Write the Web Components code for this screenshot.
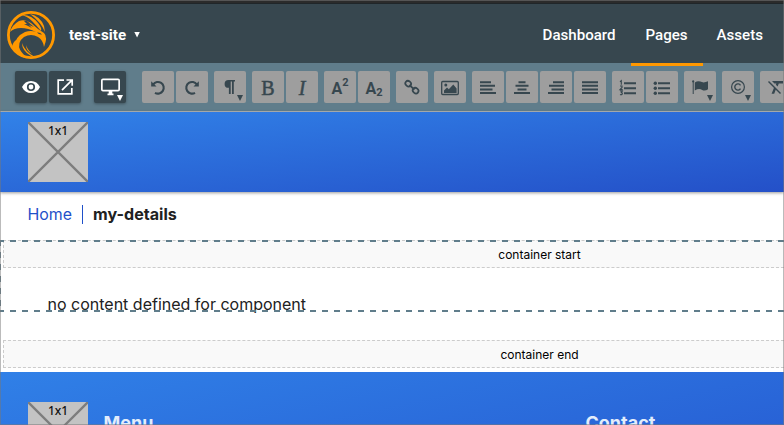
<!DOCTYPE html>
<html lang="en"><head><meta charset="utf-8"><title>test-site</title>
<style>html,body{margin:0;height:100%;overflow:hidden;background:#fff}</style></head>
<body><site-editor></site-editor>
<script>
const define=(name,css,html)=>customElements.define(name,class extends HTMLElement{
  constructor(){super();this.attachShadow({mode:'open'}).innerHTML=`<style>*{box-sizing:border-box}${css}</style>${html}`}
});
const icons={
eye:'<path fill-rule="evenodd" d="M7 16C9 12 12 9.9 16 9.9S23 12 25 16C23 20 20 22.1 16 22.1S9 20 7 16ZM16 11.9a4.1 4.1 0 1 0 0 8.2 4.1 4.1 0 0 0 0-8.2Zm0 1.7a2.4 2.4 0 1 1 0 4.8 2.4 2.4 0 0 1 0-4.8Z"/>',
open:'<path d="M15 9.2H9.2v13.6h13.6V17M17.5 9h5.7v5.7M23 9.2 13 19.2" fill="none" stroke="currentColor" stroke-width="1.7"/>',
monitor:'<path fill-rule="evenodd" d="M9 7.5h15q2 0 2 2v9q0 2-2 2h-5.7v2h1.2v1.7h-6v-1.7h1.2v-2H9q-2 0-2-2v-9q0-2 2-2Zm-.3 1.7v9.6h15.6V9.2Z"/>',
undo:'<path d="M11.2 13.4A5.8 5.8 0 1 1 13 21.8" fill="none" stroke="currentColor" stroke-width="2.1"/><path d="M9.2 10.3v5.3h5.3Z"/>',
redo:'<path d="M20.8 13.4A5.8 5.8 0 1 0 19 21.8" fill="none" stroke="currentColor" stroke-width="2.1"/><path d="M22.8 10.3v5.3h-5.3Z"/>',
para:'<path fill-rule="evenodd" d="M14.5 9H21v1.6h-1.2v12.4H18V10.6h-1.3v12.4h-1.8v-6.2h-.4a3.9 3.9 0 0 1 0-7.8Z"/>',
link:'<g fill="none" stroke="currentColor" stroke-width="1.7"><ellipse cx="12.2" cy="12.7" rx="3" ry="2.6" transform="rotate(40 12.2 12.7)"/><ellipse cx="19.6" cy="19.7" rx="3" ry="2.6" transform="rotate(40 19.6 19.7)"/><path d="m13.4 14 5 4.6" stroke-width="1.8"/></g>',
image:'<rect x="7.7" y="10.5" width="16.6" height="13" rx="1" fill="none" stroke="currentColor" stroke-width="1.3"/><circle cx="11.8" cy="14" r="1.5"/><path d="M10 22v-2.5l3-3 1.8 1.7 4.5-4.6 3.3 3.8V22Z"/>',
left:'<path d="M8 10.2h11v2H8zM8 13.8h15v2H8zM8 17.4h12.5v2H8zM8 21h16v2H8z"/>',
center:'<path d="M12.5 10.2h7v2h-7zM9.5 13.8h13v2h-13zM11.5 17.4h9v2h-9zM8 21h16v2H8z"/>',
right:'<path d="M13 10.2h11v2H13zM9 13.8h15v2H9zM11.5 17.4H24v2H11.5zM8 21h16v2H8z"/>',
justify:'<path d="M8 10.2h16v2H8zM8 13.8h16v2H8zM8 17.4h16v2H8zM8 21h16v2H8z"/>',
ol:'<path d="M12 11.2h12v2H12zM12 16.2h12v2H12zM12 21.2h12v2H12z"/><g fill="none" stroke="currentColor" stroke-width="1.1"><path d="m8 10.7 1.3-1v4M8 15h2v1.5L8 18.6h2.7M8 20h2.3l-1 1.6q1.5.3.9 1.5-.7 1-2.2.5"/></g>',
ul:'<circle cx="9.3" cy="12.2" r="1.7"/><circle cx="9.3" cy="17.2" r="1.7"/><circle cx="9.3" cy="22.2" r="1.7"/><path d="M12 11.2h12v2H12zM12 16.2h12v2H12zM12 21.2h12v2H12z"/>',
flag:'<circle cx="9.2" cy="10.4" r="1.1"/><path d="M8.7 10h1v13h-1zM10.8 11.5q3-2 5.4-.9c2.8 1.3 5 .9 7.8-.3v7.9q-3 2-5.8.7-3.3-1.8-7.4.5Z"/>',
copy:'<circle cx="16" cy="16" r="6.4" fill="none" stroke="currentColor" stroke-width="1.2"/><path d="M18.5 14.3a3.1 3.1 0 1 0 0 3.4" fill="none" stroke="currentColor" stroke-width="1.4"/>',
clear:'<path d="M12 10h11v2.4h-4.2l-1.2 3-1.8-1.7.6-1.3h-2ZM14.2 16.3l1.8 1.7-1.8 4.7h-2.6Z"/><path d="m8.5 10.5 12 12" fill="none" stroke="currentColor" stroke-width="1.4"/>'
};
customElements.define('tool-button',class extends HTMLElement{
 connectedCallback(){const r=this.attachShadow({mode:'open'}),i=this.getAttribute('icon');
 r.innerHTML=`<style>:host{display:grid;place-items:center;position:relative;flex:none;width:32px;height:32px;border-radius:2px;background:#9e9e9e;color:#37474f;font:20px "Liberation Serif",serif;-webkit-text-stroke:.5px #37474f}
 :host([dark]){background:#37474f;color:#fff;box-shadow:0 1px 3px #0005}svg{display:block;fill:currentColor}
 .arrow{position:absolute;right:3px;bottom:2px;width:6px;height:6px;background:currentColor;clip-path:polygon(0 0,100% 0,50% 100%)}
 :host([sans]){font:bold 16px Roboto,sans-serif;-webkit-text-stroke:0}::slotted(span),::slotted(em){line-height:1;margin-top:1px}</style>${i?`<svg width="32" height="32" viewBox="0 0 32 32">${icons[i]}</svg>`:'<slot></slot>'}${this.hasAttribute('menu')?'<i class="arrow"></i>':''}`}
});
customElements.define('script-letter',class extends HTMLElement{
 connectedCallback(){const up=this.hasAttribute('up');this.attachShadow({mode:'open'}).innerHTML=`<style>:host{display:flex;height:20px;margin-top:1px}span{line-height:22px}small{font-size:11px;line-height:${up?10:29}px}</style><span>A</span><small>2</small>`}
});
define('site-logo',':host{display:block;width:48px;height:48px;flex:none}svg{display:block}',`<svg width="48" height="48" viewBox="0 0 48 48" fill="#ff9800"><circle cx="24" cy="24" r="22.6" fill="none" stroke="#ff9800" stroke-width="2.8"/>
<path d="M3 21Q5 14 12 10Q18 8 24 12L31 18Q34 20 37 22Q41 26 37 36Q36 29 31 26Q24 22 17 26Q10 31 13 40L18 47Q9 44 8 36Q7 26 18 21Q24 19 29 21Q21 17 14 17Q7 17 3 21Z"/>
<path d="M14 4Q24 3 31 12Q35 17 34 20Q29 14 25 10Q20 5 14 4ZM23 3Q33 5 37 15L38 21Q34 11 23 3Z"/>
<path d="M11 28Q8 35 19 46Q9 43 5 36Q6 30 11 28ZM15 32Q15 40 24 45L28 46Q18 41 15 32ZM19 34Q19 40 25 43Q20 38 19 34Z"/>
<path d="M20 10L27 16L22 14L25 17L17 13L20 13L17 10ZM30 21.5Q33 21 35 23.5Q32 24 30 21.5Z" fill="#37474f"/></svg>`);
define('nav-link',`:host{display:flex;align-items:center;justify-content:center;position:relative;height:59px;padding:2px 15px 0;font:500 15.1px Roboto,sans-serif;color:#fff}
:host([active]){width:72px}:host([active])::after{content:"";position:absolute;z-index:1;left:0;width:72px;bottom:-3px;height:3px;background:#ff9800}`,'<slot></slot>');
define('top-nav',`:host{display:flex;height:63px;border-top:1px solid #555;background:#37474f;box-shadow:inset 0 2px #2b2b2b,inset 0 3px #202629;padding:3px 6px 0 7px;color:#fff;font:700 15.1px Roboto,sans-serif}
.site{display:flex;align-items:center;gap:8px;margin-left:14px;padding-top:2px}.site i{width:6px;height:6px;background:#fff;clip-path:polygon(0 0,100% 0,50% 100%)}nav{display:flex;margin-left:auto}site-logo{margin-top:7px}nav-link:last-child{padding-left:14px}`,
`<site-logo></site-logo><div class="site"><span>test-site</span><i></i></div><nav><nav-link>Dashboard</nav-link><nav-link active>Pages</nav-link><nav-link>Assets</nav-link></nav>`);
define('tool-bar',`:host{display:flex;gap:6px;height:49px;background:#607d8b;border-bottom:1px solid #b0b4b6;padding:8px 0 0 15px;overflow:hidden}
div{display:flex;gap:2px}.view{margin-right:7px}.device{margin-right:10px}`,
`<div class="view"><tool-button dark icon="eye"></tool-button><tool-button dark icon="open"></tool-button></div>
<tool-button class="device" dark icon="monitor" menu></tool-button>
<div><tool-button icon="undo"></tool-button><tool-button icon="redo"></tool-button></div>
<tool-button icon="para" menu></tool-button>
<div><tool-button><span>B</span></tool-button><tool-button><em>I</em></tool-button></div>
<div><tool-button sans><script-letter up></script-letter></tool-button><tool-button sans><script-letter></script-letter></tool-button></div>
<tool-button icon="link"></tool-button><tool-button icon="image"></tool-button>
<div><tool-button icon="left"></tool-button><tool-button icon="center"></tool-button><tool-button icon="right"></tool-button><tool-button icon="justify"></tool-button></div>
<div><tool-button icon="ol"></tool-button><tool-button icon="ul"></tool-button></div>
<tool-button icon="flag" menu></tool-button><tool-button icon="copy" menu></tool-button><tool-button icon="clear"></tool-button>`);
define('image-placeholder',`:host{display:grid;flex:none;width:60px;height:60px;background:#c3c3c3}svg,span{grid-area:1/1}span{justify-self:center;margin-top:1px;font:500 12px/16px "Noto Sans",sans-serif;color:#111}`,
`<svg width="60" height="60"><path d="m0 0 60 60M60 0 0 60" stroke="#7d7d7d" stroke-width="2.3"/></svg><span>1x1</span>`);
define('page-header',`:host{display:block;position:relative;height:80px;padding:10px 28px;background:linear-gradient(to bottom right,#3182e8,#2450c8);box-shadow:0 1px 3px #0006}`,'<image-placeholder></image-placeholder>');
define('bread-crumb',`:host{display:flex;align-items:center;height:48px;padding:0 27.5px 4px;font:15.9px Inter,sans-serif;color:#1f50c9}
i{width:1px;height:19px;margin:0 10px;background:#1f50c9}b{font-weight:650;font-size:16.1px;color:#212121}`,'<span>Home</span><i></i><b>my-details</b>');
define('container-mark',`:host{display:grid;justify-content:center;align-items:center;height:28px;width:781px;margin-left:3px;padding:2px 0 0 291px;border:1px dashed #ccc;border-right:0;background:#f9f9f9;font:12px/16px Inter,sans-serif;color:#000}`,'<slot></slot>');
define('page-content',`:host{display:block;position:relative;height:132px}
.outline{position:absolute;left:0;top:0;pointer-events:none}
p{margin:0;height:72px;padding:24px 47.5px 0;font:16px/24px Inter,sans-serif;color:#212121}`,
`<container-mark>container start</container-mark><p>no content defined for component</p><container-mark>container end</container-mark>
<svg class="outline" width="784" height="72" viewBox="0 0 784 72"><path d="M-2 1H784M-2 71H784" stroke="#607d8b" stroke-width="2" stroke-dasharray="6 6" fill="none"/><path d="M.5 0V72" stroke="#607d8b" stroke-dasharray="6 6"/></svg>`);
define('page-footer',`:host{display:flex;height:53px;overflow:hidden;padding:30px 28px 0;background:linear-gradient(168deg,#3080e7,#2862d6);color:#e3edfb;font:750 18px/22px Inter,sans-serif}
.m{width:482px;margin-left:15.5px}h2{font:inherit;margin:10px 0 0}`,'<image-placeholder></image-placeholder><h2 class="m">Menu</h2><h2>Contact</h2>');
define('site-editor',`:host{display:block;position:relative;width:784px;height:425px;overflow:hidden}
:host::after{content:"";position:absolute;inset:0;border:1px solid #77777780;border-top:0;pointer-events:none}`,
`<top-nav></top-nav><tool-bar></tool-bar><page-header></page-header><bread-crumb></bread-crumb><page-content></page-content><page-footer></page-footer>`);
</script></body></html>
